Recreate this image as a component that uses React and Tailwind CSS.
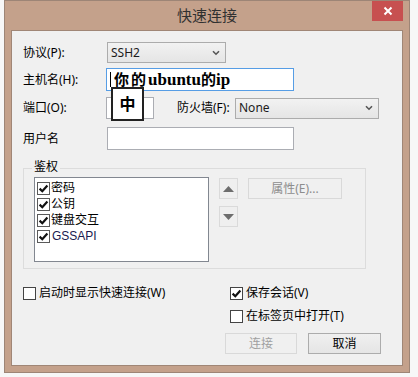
import React from "react";

const font = { fontFamily: '"Noto Sans", "Noto Sans CJK SC", sans-serif' };

function Chevron() {
  return (
    <svg width="8" height="6" viewBox="0 0 8 6" className="shrink-0">
      <path d="M1 1.2 L4 4.2 L7 1.2" fill="none" stroke="#555" strokeWidth="1.6" />
    </svg>
  );
}

function Check({ checked, border = "border-[#444]" }) {
  return (
    <span className={`flex h-[13px] w-[13px] shrink-0 items-center justify-center border ${border} bg-white`}>
      {checked && (
        <svg width="11" height="11" viewBox="0 0 11 11">
          <path d="M1.6 5.6 L4.3 8.2 L9.4 2.4" fill="none" stroke="#111" strokeWidth="2.2" />
        </svg>
      )}
    </span>
  );
}

function Select({ w, children }) {
  return (
    <div
      className={`flex h-[21px] ${w} items-center justify-between border border-[#acacac] bg-gradient-to-b from-[#f2f2f2] to-[#e5e5e5] pl-[3px] pr-[5px] text-[12px] text-[#1b1b1b]`}
    >
      <span>{children}</span>
      <Chevron />
    </div>
  );
}

export default function App() {
  return (
    <div className="h-[377px] w-[418px] bg-[#f7f7f7] text-[12px] text-black" style={font}>
      <div className="ml-[4px] flex h-[373px] w-[406px] flex-col border border-[#9d8576] bg-[#c4a18b]">
        {/* title bar */}
        <div className="relative flex h-[29px] items-center justify-center">
          <span className="text-[15px] text-[#303030]" style={{ fontFamily: '"Noto Sans CJK SC", sans-serif' }}>
            快速连接
          </span>
          <div className="absolute right-[6px] top-0 flex h-[20px] w-[31px] items-center justify-center bg-[#c75050]">
            <svg width="10" height="10" viewBox="0 0 10 10">
              <path d="M1.5 1.5 L8.5 8.5 M8.5 1.5 L1.5 8.5" stroke="#fff" strokeWidth="2" />
            </svg>
          </div>
        </div>
        {/* content */}
        <div className="relative mx-[6px] mb-[6px] flex-1 border border-[#a08676] bg-[#f0f0f0] px-[11px]">
          {/* row 1 */}
          <div className="mt-[11px] flex h-[21px] items-center">
            <span className="w-[84px]">协议(P):</span>
            <Select w="w-[119px]">SSH2</Select>
          </div>
          {/* row 2 */}
          <div className="mt-[5px] flex h-[23px] items-center">
            <span className="w-[83px]">主机名(H):</span>
            <div className="flex h-[23px] w-[188px] items-center border border-[#569de5] bg-white pl-[3px]">
              <span className="h-[15px] w-px bg-black" />
              <span
                className="ml-[3px] text-[15px] font-bold leading-none"
                style={{ fontFamily: '"Liberation Serif", "Noto Sans CJK SC", serif' }}
              >
                <span className="tracking-[2px]">你的</span>
                <span className="text-[17px]">ubuntu</span>的<span className="text-[17px]">ip</span>
              </span>
            </div>
          </div>
          {/* row 3 */}
          <div className="mt-[6px] flex h-[22px] items-center">
            <span className="w-[83px]">端口(O):</span>
            <div className="h-[22px] w-[48px] border border-[#abadb3] bg-white" />
            <span className="ml-[23px] w-[58px]">防火墙(F):</span>
            <Select w="w-[144px]">None</Select>
          </div>
          {/* row 4 */}
          <div className="mt-[8px] flex h-[23px] items-center">
            <span className="w-[84px]">用户名</span>
            <div className="h-[23px] w-[187px] border border-[#abadb3] bg-white" />
          </div>
          {/* group */}
          <div className="relative mt-[18px] h-[101px] w-[343px] border border-[#dcdcdc] pl-[10px] pt-[8px]">
            <span className="absolute left-[8px] top-[-10px] bg-[#f0f0f0] px-[2px] leading-[16px]">鉴权</span>
            <div className="flex">
              <div className="h-[85px] w-[175px] border border-[#828790] bg-white pl-[2px] pt-[2px]">
                {["密码", "公钥", "键盘交互"].map((t) => (
                  <div key={t} className="flex h-[16px] items-center">
                    <Check checked border="border-[#5a5a5a]" />
                    <span className="ml-px leading-none">{t}</span>
                  </div>
                ))}
                <div className="flex h-[16px] items-center">
                  <Check checked border="border-[#5a5a5a]" />
                  <span
                    className="ml-[2px] text-[12px] leading-none text-[#1a1a50]"
                    style={{ fontFamily: '"Liberation Sans", sans-serif' }}
                  >
                    GSSAPI
                  </span>
                </div>
              </div>
              <div className="ml-[10px] mt-px flex flex-col gap-[7px]">
                <div className="flex h-[21px] w-[19px] items-center justify-center border border-[#dadada] bg-[#efefef]">
                  <svg width="11" height="6" viewBox="0 0 11 6">
                    <path d="M0 6 L5.5 0 L11 6 Z" fill="#6d6d6d" />
                  </svg>
                </div>
                <div className="flex h-[21px] w-[19px] items-center justify-center border border-[#dadada] bg-[#efefef]">
                  <svg width="11" height="6" viewBox="0 0 11 6">
                    <path d="M0 0 L5.5 6 L11 0 Z" fill="#6d6d6d" />
                  </svg>
                </div>
              </div>
              <div className="ml-[10px] mt-px flex h-[21px] w-[94px] items-center justify-center border border-[#d9d9d9] bg-[#f0f0f0] text-[#8d8d8d]">
                属性(E)...
              </div>
            </div>
          </div>
          {/* bottom options */}
          <div className="mt-[16px] flex h-[16px] items-center">
            <div className="flex w-[207px] items-center">
              <Check />
              <span className="ml-[3px]">启动时显示快速连接(W)</span>
            </div>
            <Check checked />
            <span className="ml-[3px]">保存会话(V)</span>
          </div>
          <div className="mt-[7px] flex h-[16px] items-center pl-[207px]">
            <Check />
            <span className="ml-[3px]">在标签页中打开(T)</span>
          </div>
          <div className="mt-[9px] flex h-[21px] justify-end gap-[11px] pr-[10px]">
            <div className="flex w-[72px] items-center justify-center border border-[#d9d9d9] bg-[#f0f0f0] text-[#a0a0a0]">
              连接
            </div>
            <div className="flex w-[73px] items-center justify-center border border-[#acacac] bg-gradient-to-b from-[#f0f0f0] to-[#e5e5e5]">
              取消
            </div>
          </div>
          {/* IME popup */}
          <div className="absolute left-[99px] top-[56px] flex h-[34px] w-[33px] items-center justify-center border-2 border-[#222] bg-white text-[16px] font-bold">
            中
          </div>
        </div>
      </div>
    </div>
  );
}
